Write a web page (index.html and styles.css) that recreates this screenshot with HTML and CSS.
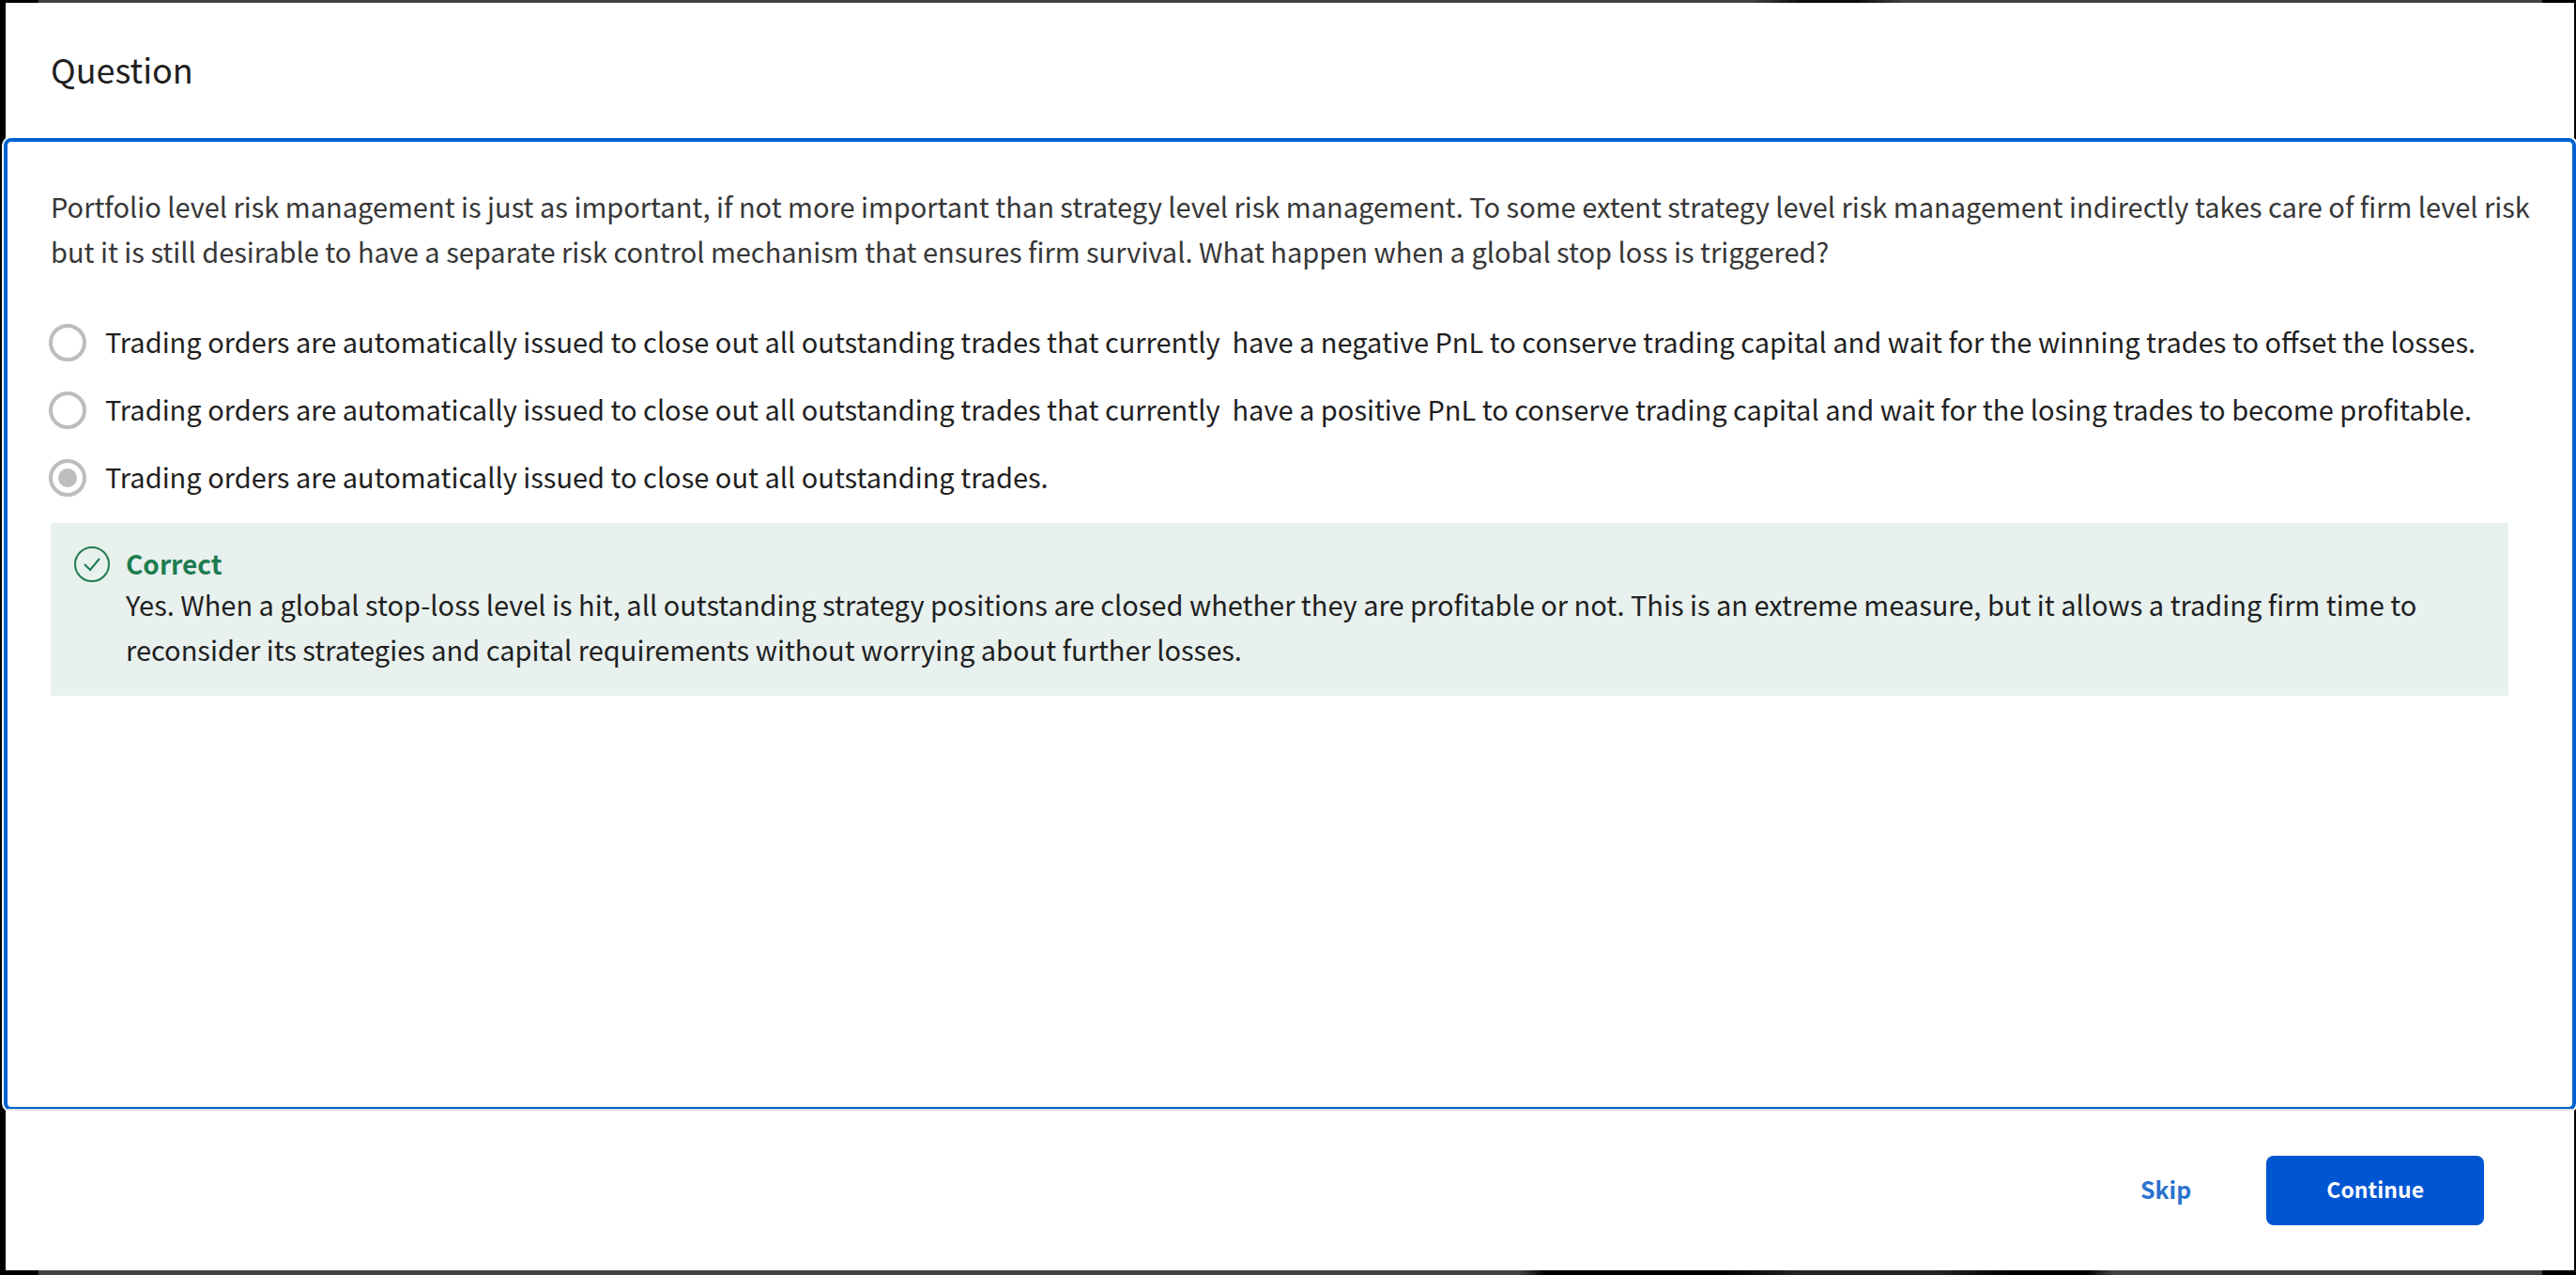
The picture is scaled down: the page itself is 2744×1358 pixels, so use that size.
FILE: index.html
```html
<!DOCTYPE html>
<html lang="en">
<head>
  <meta charset="utf-8">
  <meta name="viewport" content="width=device-width, initial-scale=1">
  <title>Question</title>
  <link rel="stylesheet" href="styles.css">
</head>
<body class="backdrop">
  <form class="dialog" role="dialog" aria-labelledby="dialog-title">
    <header class="dialog-header">
      <h1 class="dialog-title" id="dialog-title">Question</h1>
    </header>

    <main class="dialog-body">
      <p class="prompt" id="prompt">Portfolio level risk management is just as important, if not more important than strategy level risk management. To some extent strategy level risk management indirectly takes care of firm level risk but it is still desirable to have a separate risk control mechanism that ensures firm survival. What happen when a global stop loss is triggered?</p>

      <div class="options" role="radiogroup" aria-labelledby="prompt">
        <label class="option">
          <input class="option-radio" type="radio" name="answer" value="negative" disabled>
          <span class="option-text">Trading orders are automatically issued to close out all outstanding trades that currently&nbsp; have a negative PnL to conserve trading capital and wait for the winning trades to offset the losses.</span>
        </label>
        <label class="option">
          <input class="option-radio" type="radio" name="answer" value="positive" disabled>
          <span class="option-text">Trading orders are automatically issued to close out all outstanding trades that currently&nbsp; have a positive PnL to conserve trading capital and wait for the losing trades to become profitable.</span>
        </label>
        <label class="option">
          <input class="option-radio" type="radio" name="answer" value="all" checked disabled>
          <span class="option-text">Trading orders are automatically issued to close out all outstanding trades.</span>
        </label>
      </div>

      <section class="feedback">
        <svg class="feedback-icon" viewBox="0 0 40 40" fill="none" stroke="currentColor" stroke-width="2" aria-hidden="true">
          <circle cx="20" cy="20" r="18"/>
          <path d="M12 20l6 6L28 14"/>
        </svg>
        <div class="feedback-content">
          <h2 class="feedback-title">Correct</h2>
          <p class="feedback-text">Yes. When a global stop-loss level is hit, all outstanding strategy positions are closed whether they are profitable or not. This is an extreme measure, but it allows a trading firm time to reconsider its strategies and capital requirements without worrying about further losses.</p>
        </div>
      </section>
    </main>

    <footer class="dialog-footer">
      <button class="button button-text" type="button">Skip</button>
      <button class="button button-primary" type="submit">Continue</button>
    </footer>
  </form>
</body>
</html>
```

FILE: styles.css
```css
*,
*::before,
*::after {
  box-sizing: border-box;
}

.backdrop {
  display: flex;
  min-height: 100vh;
  margin: 0;
  padding: 3px 2px 5px 6px;
  background-color: #000;
  background-image:
    linear-gradient(90deg, #000 41px, #424242 41px, #424242 68%, #0b0a05 70%, #0b0a05 72%, #424242 74%, #424242 calc(100% - 36px), #000 calc(100% - 36px)),
    linear-gradient(90deg, #000 41px, #424242 41px, #424242 59%, #000 60%, #000 67%, #25242a 70%, #25242a 75%, #000 78%, #000 81%, #424242 82%, #424242 calc(100% - 36px), #000 calc(100% - 36px));
  background-position: top, bottom;
  background-repeat: no-repeat;
  background-size: 100% 3px, 100% 5px;
  color: #1f1f1f;
  font-family: "Noto Sans CJK SC", "Noto Sans", sans-serif;
  font-size: 29px;
  line-height: 48px;
}

.dialog {
  display: flex;
  flex: 1;
  flex-direction: column;
  background: #fff;
}

.dialog-header {
  padding: 48px 48px 54px;
}

.dialog-title {
  margin: 0;
  font-size: 36px;
  font-weight: 400;
  line-height: 44px;
}

.dialog-body {
  flex: 1;
  padding: 46px 44px 48px 48px;
  border-radius: 6px;
  box-shadow: 0 0 0 4px #fff;
  outline: 4px solid #0062d1;
  outline-offset: -2px;
}

.prompt {
  margin: 0 0 38px;
  color: #373737;
}

.options {
  display: flex;
  flex-direction: column;
}

.option {
  display: flex;
  align-items: flex-start;
  gap: 20px;
  margin-left: -2px;
  padding: 12px 0;
  line-height: 44px;
}

.option-radio {
  display: grid;
  flex: none;
  place-content: center;
  width: 40px;
  height: 40px;
  margin: 4px 0;
  border: 4px solid #bdbdbd;
  border-radius: 50%;
  background: #fff;
  appearance: none;
}

.option-radio:checked::before {
  width: 20px;
  height: 20px;
  border-radius: 50%;
  background: #bdbdbd;
  content: "";
}

.feedback {
  display: flex;
  gap: 16px;
  margin: 12px 26px 0 0;
  padding: 24px 24px 26px;
  background: #e8f1ee;
}

.feedback-icon {
  flex: none;
  width: 40px;
  height: 40px;
  color: #1d7c50;
}

.feedback-content {
  flex: 1;
}

.feedback-title {
  margin: 0;
  color: #1d7c50;
  font-size: 28px;
  font-weight: 700;
  line-height: 38px;
}

.feedback-text {
  margin: 0;
}

.dialog-footer {
  position: relative;
  display: flex;
  align-items: center;
  justify-content: flex-end;
  gap: 32px;
  padding: 48px 96px;
  border-top: 2px solid #e1e1e1;
  background: #fff;
}

.button {
  height: 74px;
  padding: 0 48px 4px;
  border: 0;
  border-radius: 8px;
  background: none;
  font-family: inherit;
  font-size: 25px;
  font-weight: 700;
  line-height: 36px;
}

.button-text {
  color: #2a73cc;
}

.button-primary {
  padding: 0 64px 4px;
  background: #0056d2;
  color: #fff;
  font-size: 23px;
}
```
